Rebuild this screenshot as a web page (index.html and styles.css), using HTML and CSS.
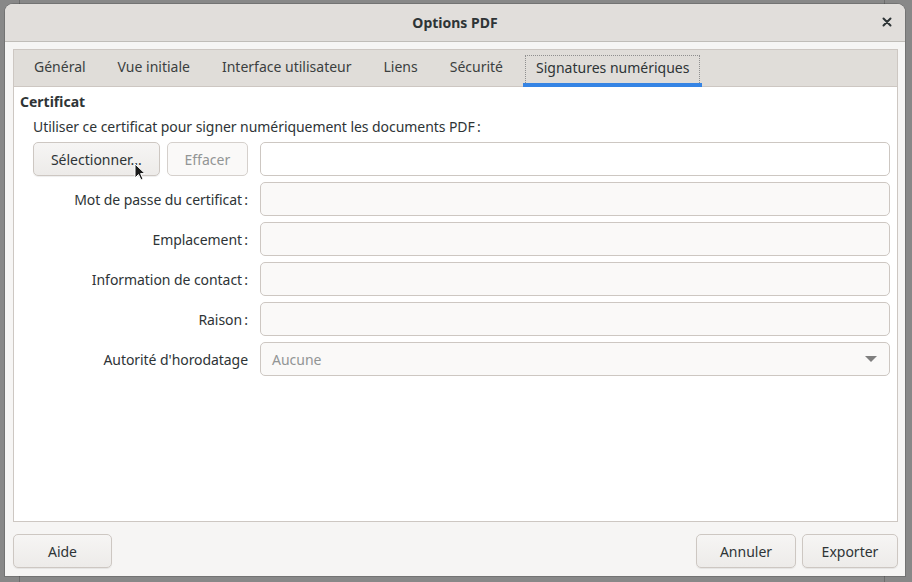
FILE: index.html
```html
<!DOCTYPE html>
<html lang="fr">
<head>
<meta charset="utf-8">
<link rel="stylesheet" href="styles.css">
</head>
<body>
<div class="backdrop">
  <div class="dialog">
    <div class="titlebar">
      <span class="title">Options PDF</span>
      <span class="close">
        <svg width="10" height="10" viewBox="0 0 10 10"><path d="M1.5 1.5 L8.5 8.5 M8.5 1.5 L1.5 8.5" stroke="#2e3436" stroke-width="2" stroke-linecap="round"/></svg>
      </span>
    </div>
    <div class="body">
      <div class="notebook">
        <div class="tabs">
          <div class="tab">Général</div>
          <div class="tab">Vue initiale</div>
          <div class="tab">Interface utilisateur</div>
          <div class="tab">Liens</div>
          <div class="tab">Sécurité</div>
          <div class="tab active"><span class="focus">Signatures numériques</span></div>
        </div>
        <div class="page">
          <div class="section-title">Certificat</div>
          <div class="intro">Utiliser ce certificat pour signer numériquement les documents PDF&#8239;:</div>
          <div class="grid">
            <div class="btnrow">
              <button class="btn sel">Sélectionner...</button>
              <button class="btn disabled">Effacer</button>
            </div>
            <div class="entry white"></div>
            <div class="label">Mot de passe du certificat&#8239;:</div>
            <div class="entry"></div>
            <div class="label">Emplacement&#8239;:</div>
            <div class="entry"></div>
            <div class="label">Information de contact&#8239;:</div>
            <div class="entry"></div>
            <div class="label">Raison&#8239;:</div>
            <div class="entry"></div>
            <div class="label">Autorité d'horodatage</div>
            <div class="entry combo"><span class="placeholder">Aucune</span>
              <svg class="arrow" width="12" height="7" viewBox="0 0 12 7"><path d="M0 0 H12 L6 6 Z" fill="#7f7f7f"/></svg>
            </div>
          </div>
          <svg class="cursor" width="12" height="18" viewBox="0 0 12 18"><path d="M1 1 V15 L4.5 11.5 L7 17 L9 16 L6.6 10.6 L11 10.6 Z" fill="#1a1a1a" stroke="#fff" stroke-width="1"/></svg>
        </div>
      </div>
      <div class="actions">
        <button class="btn big aide">Aide</button>
        <div class="spacer"></div>
        <button class="btn big annuler">Annuler</button>
        <button class="btn big exporter">Exporter</button>
      </div>
    </div>
  </div>
</div>
</body>
</html>
```

FILE: styles.css
```css
* { box-sizing: border-box; }
html, body { margin: 0; padding: 0; }
body {
  width: 912px;
  height: 582px;
  overflow: hidden;
  font-family: "Noto Sans", "Open Sans", sans-serif;
  font-size: 14px;
  color: #2e3436;
}
.backdrop {
  width: 912px;
  height: 582px;
  background: #888888;
  background-image:
    linear-gradient(to right, transparent 19px, #6d6d6d 19px, #6d6d6d 20px, transparent 20px),
    linear-gradient(to right, transparent 884px, #6d6d6d 884px, #6d6d6d 885px, transparent 885px);
  padding: 4px 7px 6px 5px;
}
.dialog {
  width: 900px;
  height: 572px;
  background: #f6f5f4;
  border-radius: 8px 8px 0 0;
  display: flex;
  flex-direction: column;
  overflow: hidden;
  box-shadow: 0 0 0 1px rgba(0,0,0,0.15);
}
.titlebar {
  height: 38px;
  flex: none;
  background: #e1dedb;
  border-bottom: 1px solid #c0bdb8;
  display: flex;
  align-items: center;
  justify-content: center;
  position: relative;
}
.title {
  font-weight: bold;
  font-size: 14px;
  color: #2e3436;
}
.close {
  position: absolute;
  right: 13px;
  top: 13px;
  width: 10px;
  height: 10px;
  display: flex;
}
.body {
  flex: 1;
  display: flex;
  flex-direction: column;
  padding: 7px 7px 8px 8px;
}
.notebook {
  height: 473px;
  border: 1px solid #cdc7c2;
  display: flex;
  flex-direction: column;
}
.tabs {
  height: 37px;
  flex: none;
  background: #e0ddd9;
  border-bottom: 1px solid #cdc7c2;
  display: flex;
  padding: 0 4px;
}
.tab {
  margin: 0 4px;
  padding: 0 12px 3px;
  display: flex;
  align-items: center;
  color: #3b3f40;
  font-size: 14px;
  position: relative;
}
.tab.active {
  color: #2e3436;
  border-bottom: 4px solid #3584e4;
  margin-bottom: -1px;
  padding: 0 2px;
  align-items: stretch;
}
.tab.active .focus {
  display: flex;
  align-items: center;
  margin-top: 5px;
  padding: 0 10px 5px;
  border: 1px dotted #8f8f8f;
  border-bottom: none;
}
.page {
  flex: 1;
  background: #ffffff;
  padding: 6px 7px;
  position: relative;
}
.section-title {
  font-weight: bold;
  height: 17px;
  line-height: 17px;
  margin-left: -1px;
}
.intro {
  margin: 8px 0 0 12px;
  height: 18px;
  line-height: 18px;
  letter-spacing: -0.06px;
}
.grid {
  margin: 6px 0 0 12px;
  display: grid;
  grid-template-columns: 215px 1fr;
  column-gap: 12px;
  row-gap: 6px;
}
.btnrow {
  display: flex;
  gap: 7px;
}
.btn {
  font-family: inherit;
  font-size: 14px;
  color: #2e3436;
  height: 34px;
  border: 1px solid #cdc7c2;
  border-radius: 5px;
  background: linear-gradient(#f6f5f4, #edebe9);
  box-shadow: 0 1px 1px rgba(0,0,0,0.07);
  padding: 0;
}
.btn.sel { width: 128px; }
.btn.disabled {
  width: 82px;
  color: #929595;
  background: #faf9f8;
  box-shadow: none;
  border-color: #d5d0cc;
}
.entry {
  height: 34px;
  border: 1px solid #cdc7c2;
  border-radius: 5px;
  background: #faf9f8;
}
.entry.white { background: #ffffff; }
.label {
  height: 34px;
  display: flex;
  align-items: center;
  justify-content: flex-end;
  color: #2e3436;
  letter-spacing: -0.06px;
}
.combo {
  display: flex;
  align-items: center;
  padding: 0 12px 0 11px;
}
.placeholder {
  color: #929595;
  flex: 1;
}
.arrow { margin-top: 1px; }
.cursor {
  position: absolute;
  left: 120px;
  top: 76px;
}
.actions {
  margin-top: 12px;
  display: flex;
  gap: 6px;
}
.spacer { flex: 1; }
.btn.big { height: 34px; }
.btn.aide { width: 99px; }
.btn.annuler { width: 100px; }
.btn.exporter { width: 96px; }
```
